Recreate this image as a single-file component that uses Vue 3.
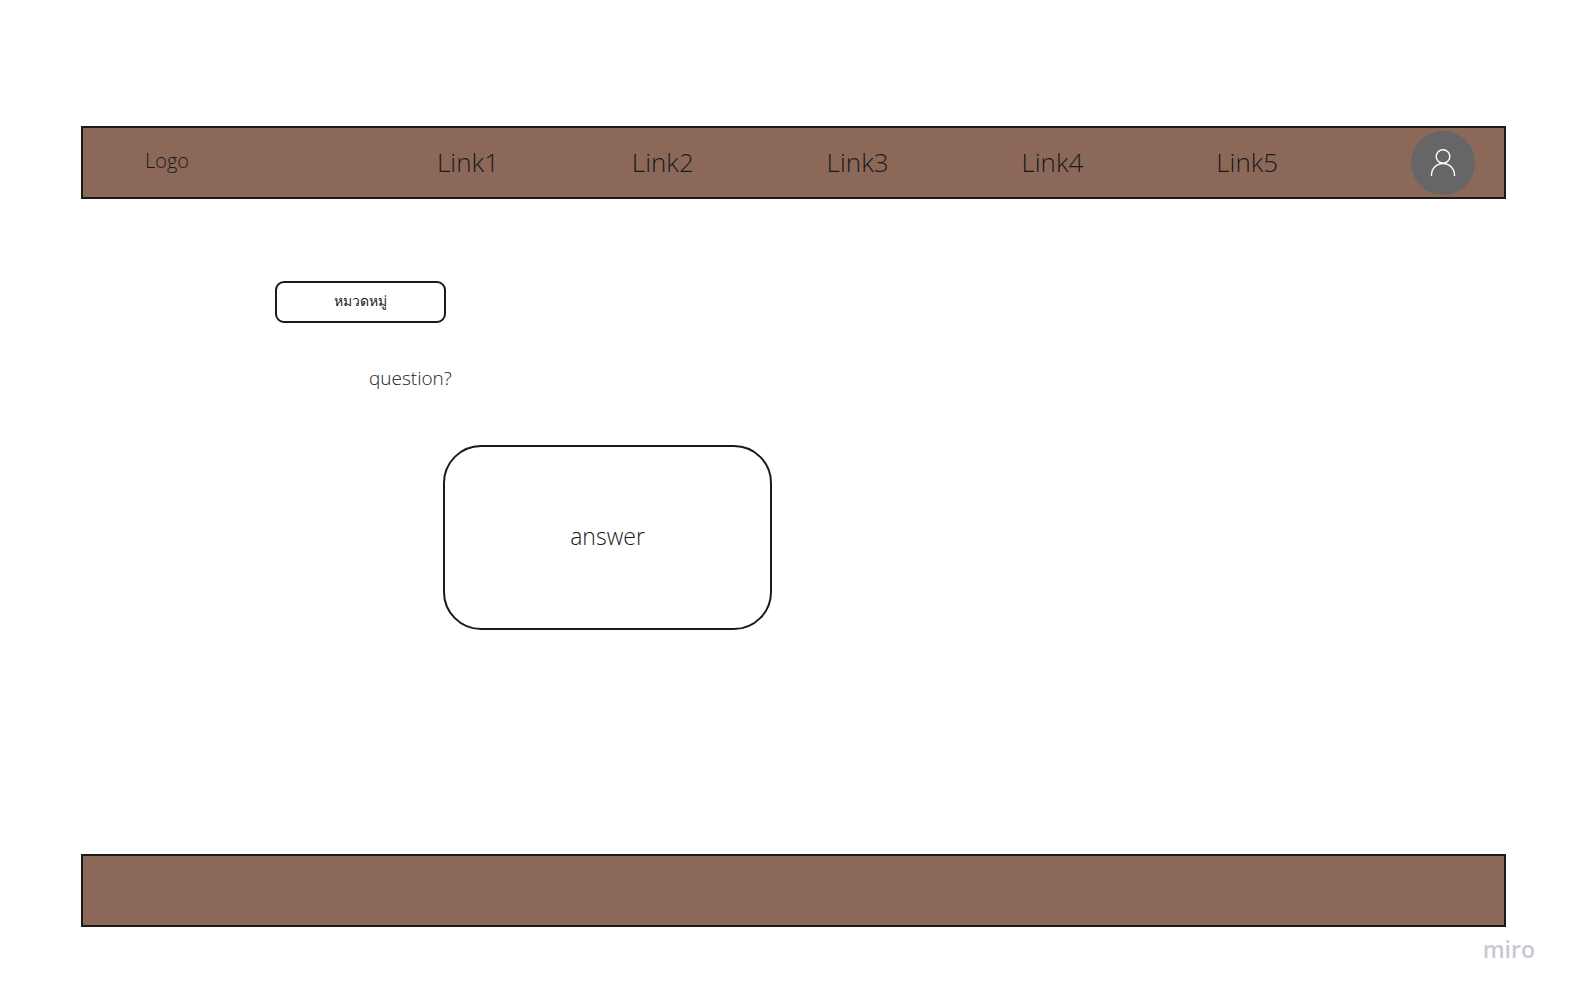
<script setup>
const links = ['Link1', 'Link2', 'Link3', 'Link4', 'Link5']
</script>

<template>
  <div class="page">
    <header class="bar header">
      <a class="logo" href="#">Logo</a>
      <nav class="nav" aria-label="Main">
        <a v-for="link in links" :key="link" class="link" href="#">{{ link }}</a>
        <button class="avatar" type="button" aria-label="Account">
          <svg viewBox="0 0 26 28" width="26" height="28" aria-hidden="true">
            <circle cx="13" cy="7.5" r="6.8" />
            <path d="M1.5 27v-1a11.5 11.5 0 0 1 23 0v1" />
          </svg>
        </button>
      </nav>
    </header>

    <main class="main">
      <button class="category" type="button">หมวดหมู่</button>
      <p class="question">question?</p>
      <section class="answer">answer</section>
    </main>

    <footer class="bar"></footer>
    <div class="brand">miro</div>
  </div>
</template>

<style>
body {
  margin: 0;
  background: #ffffff;
}
</style>

<style scoped>
.page {
  box-sizing: border-box;
  display: flex;
  flex-direction: column;
  min-height: 100vh;
  padding: 126px 64px 31px 81px;
  color: #1a1a1a;
  font-family: "Open Sans", "Noto Sans", sans-serif;
  font-weight: 300;
}

.bar {
  box-sizing: border-box;
  min-height: 73px;
  border: 2px solid #1a1a1a;
  background: #8c6859;
}

.header {
  display: grid;
  grid-template-columns: 292px 1fr;
  align-items: center;
  padding: 0 29px 0 62px;
}

.logo,
.link {
  color: inherit;
  text-decoration: none;
}

.logo {
  padding-bottom: 4px;
  font-size: 20px;
  line-height: 28px;
}

.nav {
  display: flex;
  align-items: center;
  justify-content: space-between;
}

.link {
  padding-bottom: 2px;
  font-size: 26px;
  line-height: 36px;
}

.avatar {
  display: flex;
  align-items: center;
  justify-content: center;
  width: 64px;
  height: 64px;
  padding: 0;
  border: 0;
  border-radius: 50%;
  background: #666666;
}

.avatar svg {
  fill: none;
  stroke: #ffffff;
  stroke-width: 1.4;
}

.main {
  display: flex;
  flex: 1;
  flex-direction: column;
  align-items: flex-start;
  padding: 82px 0 40px 194px;
}

.category {
  width: 171px;
  height: 42px;
  padding: 0 0 2px;
  border: 2px solid #1a1a1a;
  border-radius: 9px;
  background: #ffffff;
  color: inherit;
  font: inherit;
  font-size: 14px;
}

.question {
  margin: 41px 0 53px 94px;
  font-size: 19px;
  line-height: 28px;
}

.answer {
  box-sizing: border-box;
  display: flex;
  align-items: center;
  justify-content: center;
  width: 329px;
  min-height: 185px;
  margin-left: 168px;
  padding-bottom: 4px;
  border: 2px solid #1a1a1a;
  border-radius: 38px;
  font-size: 23px;
  line-height: 32px;
}

.brand {
  align-self: flex-end;
  margin: 8px -29px 0 0;
  color: #c9c8d3;
  font-size: 23px;
  font-weight: 600;
  line-height: 28px;
}
</style>
